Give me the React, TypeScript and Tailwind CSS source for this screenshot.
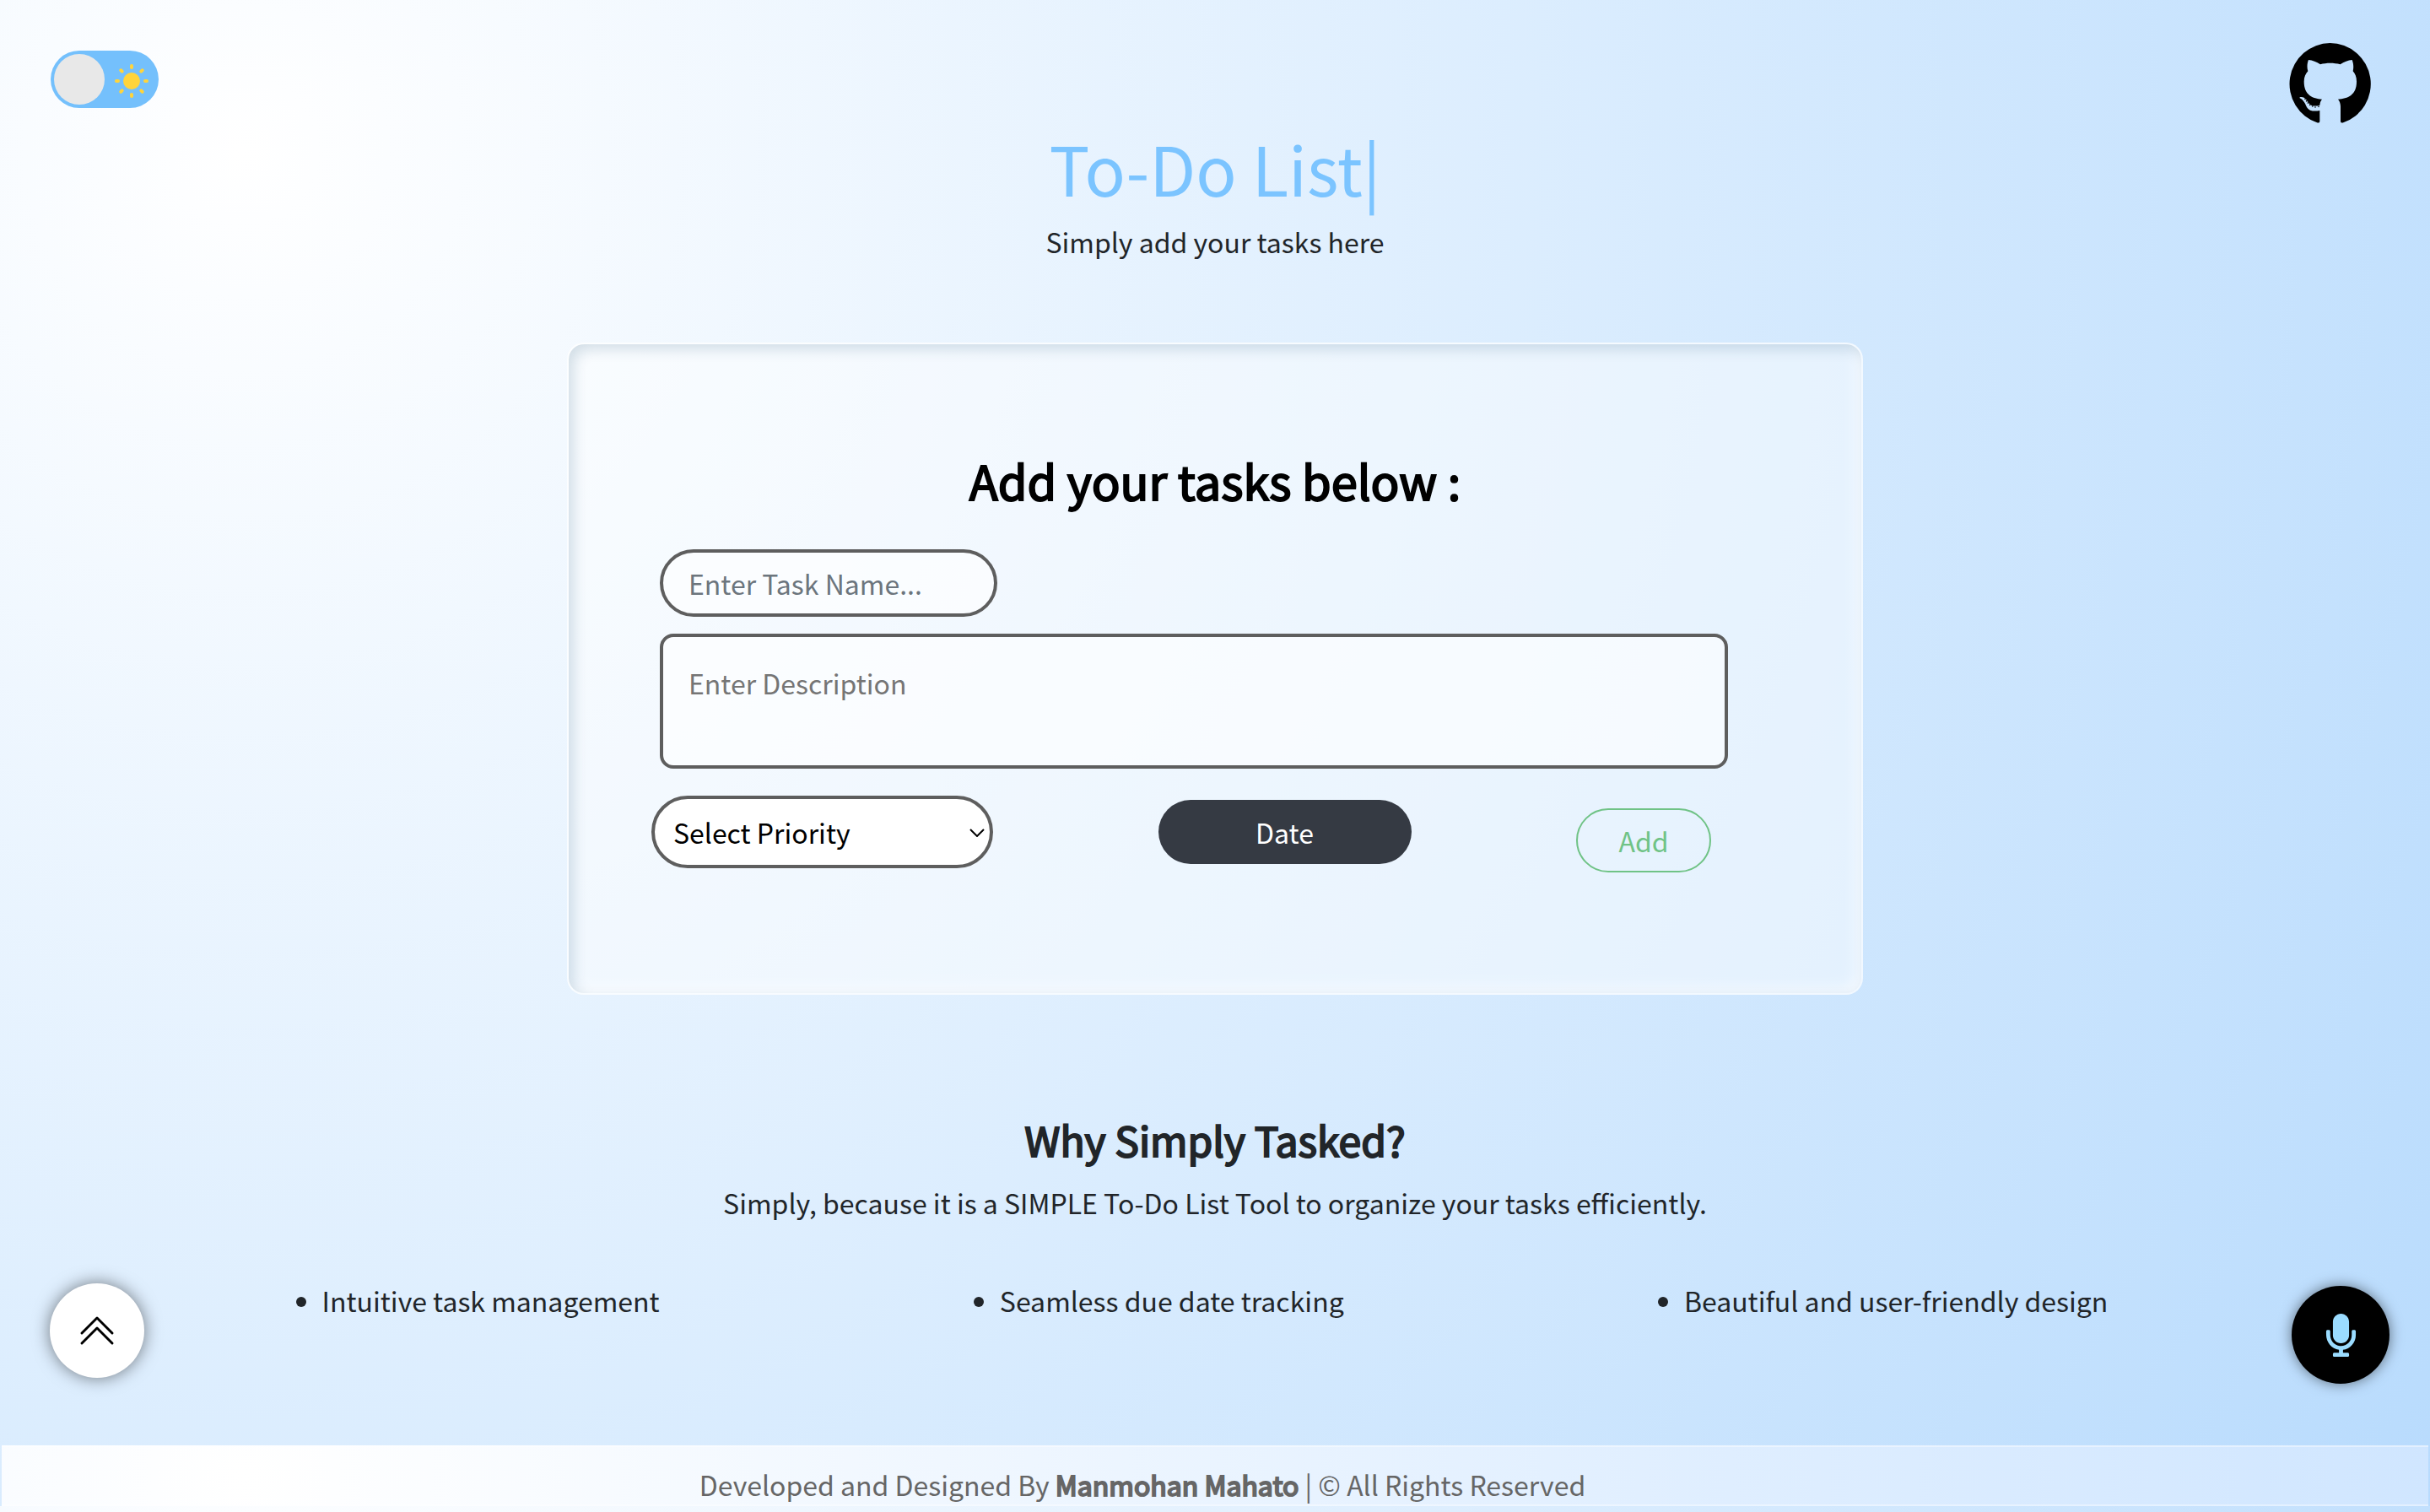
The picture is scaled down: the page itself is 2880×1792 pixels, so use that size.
import { useState } from "react";
import { BsChevronDoubleUp } from "react-icons/bs";
import { FaMicrophone } from "react-icons/fa";

const RAY_ANGLES = [0, 45, 90, 135, 180, 225, 270, 315];

const FEATURES = [
  "Intuitive task management",
  "Seamless due date tracking",
  "Beautiful and user-friendly design",
];

const TAIL_DOTS = [
  [397, 352],
  [402, 359],
  [407, 366],
  [414, 373],
  [423, 378],
  [433, 381],
  [445, 379],
];

function SunIcon() {
  return (
    <svg viewBox="-20 -20 40 40" className="h-10 w-10" aria-hidden="true">
      <circle r="10" fill="#ffd43b" />
      {RAY_ANGLES.map((angle) => (
        <rect
          key={angle}
          x="-2"
          y="-20"
          width="4"
          height="6"
          rx="2"
          fill="#ffd43b"
          transform={`rotate(${angle})`}
        />
      ))}
    </svg>
  );
}

function GithubLogo() {
  return (
    <svg viewBox="340 153 291 291" className="h-[97px] w-[97px]" fill="currentColor" aria-hidden="true">
      <path d="M485.5 153A145.5 145.5 0 0 0 441 436.500Q449 438 449 431V393C438 395 426 396 415 392C402 386 401 374 394 364C389 356 384 352 378 349Q376 345 381 345C388 344 396 347 401 354C407 362 411 371 420 375C429 378 440 377 449 374C450 365 452 358 457 353C424 350 393 338 393 290C393 274 399 262 407 253C403 240 404 225 409 213C423 213 438 221 451 229C473 223 499 223 522 229C535 221 550 213 564 213C569 225 570 240 567 253C575 262 580 274 580 290C580 338 549 350 514 353C520 358 523 370 523 380V431Q523 438 531 436.500A145.500 145.500 0 0 0 485.500 153Z" />
      {TAIL_DOTS.map(([cx, cy]) => (
        <circle key={cx} cx={cx} cy={cy} r="2.5" />
      ))}
    </svg>
  );
}

function ThemeToggle() {
  const [dark, setDark] = useState(false);
  return (
    <label className="mt-[9px] flex h-[68px] w-32 cursor-pointer items-center rounded-full bg-[#74c0fc] p-1">
      <input
        type="checkbox"
        aria-label="Toggle dark theme"
        className="peer sr-only"
        checked={dark}
        onChange={(e) => setDark(e.target.checked)}
      />
      <span className="h-[60px] w-[60px] shrink-0 rounded-full bg-[#e8e8e8] peer-checked:order-2" />
      <span className="mt-1 ml-3">
        <SunIcon />
      </span>
    </label>
  );
}

function TaskForm() {
  return (
    <form
      onSubmit={(e) => e.preventDefault()}
      className="mx-auto mt-24 w-[1536px] max-w-full rounded-[20px] border-2 border-white/50 bg-white/45 pt-[127px] pb-[143px] shadow-[inset_6px_6px_16px_rgba(0,60,100,0.16),inset_-6px_-6px_16px_rgba(255,255,255,0.6)]"
    >
      <h2 className="text-center text-[56px] leading-[67px] text-black [-webkit-text-stroke:2px_currentColor]">
        Add your tasks below :
      </h2>
      <div className="mt-[49px] flex flex-col pr-[158px] pl-[98px]">
        <input
          type="text"
          aria-label="Task name"
          placeholder="Enter Task Name..."
          className="ml-[10px] h-20 w-[400px] rounded-full border-4 border-[#5e5e5e] bg-white/60 px-[30px] placeholder:text-[#6c757d]"
        />
        <textarea
          aria-label="Description"
          placeholder="Enter Description"
          className="mt-5 ml-[10px] h-40 resize-none rounded-2xl border-4 border-[#5e5e5e] bg-white/60 p-[30px] placeholder:text-[#757575]"
        />
        <div className="mt-8 mr-5 flex items-start justify-between">
          <div className="relative">
            <select
              aria-label="Priority"
              className="h-[86px] w-[405px] appearance-none rounded-full border-4 border-[#5e5e5e] bg-white px-[22px] text-black"
            >
              <option>Select Priority</option>
              <option>High</option>
              <option>Medium</option>
              <option>Low</option>
            </select>
            <svg
              viewBox="0 0 18 10"
              className="pointer-events-none absolute top-[39px] right-[10px] h-[10px] w-[18px]"
              aria-hidden="true"
            >
              <path d="M1 1l8 8 8-8" fill="none" stroke="black" strokeWidth="2" />
            </svg>
          </div>
          <button type="button" className="mt-[5px] h-[76px] w-[300px] rounded-full bg-[#353a43] text-white">
            Date
          </button>
          <button
            type="submit"
            className="mt-[15px] h-[76px] w-40 rounded-full border-2 border-[#70c386] text-[#70c386]"
          >
            Add
          </button>
        </div>
      </div>
    </form>
  );
}

export default function App() {
  return (
    <div className="flex min-h-screen flex-col font-['Noto_Sans_CJK_SC',sans-serif] text-[32px] leading-[48px] text-[#212529]">
      <div className="flex flex-col bg-[radial-gradient(circle_at_10%_10%,#ffffff_0%,#b8dbfd_100%)]">
        <header className="flex h-[147px] items-start justify-between pt-[51px] pr-[70px] pl-[60px]">
          <ThemeToggle />
          <a href="#github" aria-label="GitHub repository" className="text-black">
            <GithubLogo />
          </a>
        </header>

        <main>
          <section className="mt-[3px] text-center">
            <h1 className="text-[80px] leading-24 text-[#7bc4ff]">To-Do List|</h1>
            <p className="mt-4">Simply add your tasks here</p>
          </section>

          <TaskForm />

          <section className="mt-[142px] text-center">
            <h2 className="text-[48px] leading-[58px] [-webkit-text-stroke:2px_currentColor]">
              Why Simply Tasked?
            </h2>
            <p className="mt-[22px]">
              Simply, because it is a SIMPLE To-Do List Tool to organize your tasks efficiently.
            </p>
            <ul className="mx-[180px] mt-[68px] flex list-disc justify-around">
              {FEATURES.map((feature) => (
                <li key={feature}>{feature}</li>
              ))}
            </ul>
          </section>
        </main>

        <footer className="mx-[2px] mt-[148px] border-y-2 border-white/40 bg-[radial-gradient(circle_at_10%_50%,#ffffff_0%,#d0e6ff_100%)] pt-5 pr-[172px] text-center text-[#666666]">
          Developed and Designed By{" "}
          <span className="[-webkit-text-stroke:2px_currentColor]">Manmohan Mahato</span> | © All Rights
          Reserved
        </footer>
      </div>
      <div className="grow bg-[radial-gradient(3016px_circle_at_10%_178px,#ffffff_0%,#b8dbfd_100%)]" />

      <button
        type="button"
        aria-label="Scroll to top"
        className="fixed bottom-[159px] left-[59px] flex h-28 w-28 items-center justify-center rounded-full bg-white text-black shadow-[0_0_20px_rgba(0,0,0,0.5)]"
      >
        <BsChevronDoubleUp className="h-12 w-12" />
      </button>
      <button
        type="button"
        aria-label="Voice input"
        className="fixed right-12 bottom-[152px] flex h-[116px] w-[116px] items-center justify-center rounded-full bg-black text-[#9bdcff] shadow-[0_0_16px_rgba(0,0,0,0.5)]"
      >
        <FaMicrophone className="h-[51px] w-[51px]" />
      </button>
    </div>
  );
}
